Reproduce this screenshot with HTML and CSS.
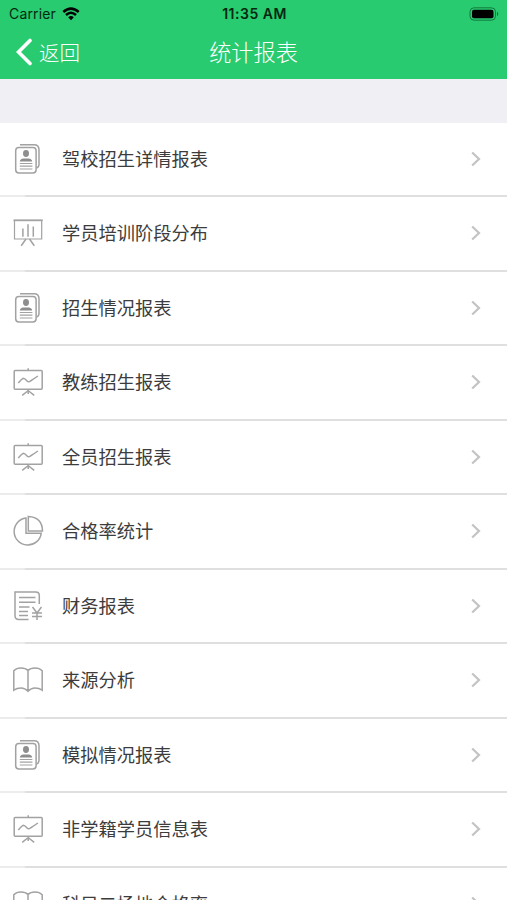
FILE: index.html
```html
<!DOCTYPE html>
<html lang="zh-CN">
<head>
<meta charset="utf-8">
<title>统计报表</title>
<link rel="stylesheet" href="styles.css">
</head>
<body>
<svg class="defs" width="0" height="0" aria-hidden="true">
  <symbol id="cards" viewBox="0 0 32 32">
    <path d="M8 1.800h14q5 0 5 5v14.500q0 3-2.500 3.800"/>
    <rect x="3.700" y="4.600" width="20.400" height="25.400" rx="3.200"/>
    <path class="fill" d="M14 7q3 0 3 3.400 0 3.300-3 3.600-3-.3-3-3.600 0-3.400 3-3.400zM7.800 18.400q.3-2.500 3.700-2.900h5q3.400.4 3.700 2.900z"/>
    <path class="thin" d="M7.800 20.500h12.600M7.800 23.200h12.600M7.800 26h12.600"/>
  </symbol>
  <symbol id="bars" viewBox="0 0 32 32">
    <path d="M1.500 3.300h29.200" stroke-width="1.800"/>
    <path class="thin" d="M2.500 3.500v18.500h27.200V3.500"/>
    <path d="M14 22l-4.800 6.700M17.500 22l4.800 6.700M10.900 19.700v-8.200M16 19.700V7.200M21.300 19.700v-10.200"/>
  </symbol>
  <symbol id="board" viewBox="0 0 32 32">
    <rect x="2.200" y="4.500" width="28" height="18.700" rx="1"/>
    <path d="M16.200 2.300v2M6.300 17q3-3.700 4.800-4.700 1.500 0 4 2.700 1.500 1.600 3.300 0 3.200-2 7.500-5M16.200 23v5M15.700 25l-5.500 4.300M16.700 25l5.500 4.300"/>
  </symbol>
  <symbol id="pie" viewBox="0 0 32 32">
    <path d="M14 3A13.600 13.600 0 1 0 29.200 18.300H14z"/>
    <path d="M16.300 1.400V16h14.200Q30.300 2.100 16.300 1.400z"/>
  </symbol>
  <symbol id="finance" viewBox="0 0 32 32">
    <path d="M27.300 14V5.500q0-3.500-3.500-3.500H3v23.500q0 4 4 4h9.500M7 7.500h16.500M7 12.300h16.500M7 17h10.500M7 21.500h9M7 25.500h9"/>
    <path d="M20.500 17l4.500 6 4.500-6M25 23v7M20 23h10M20 26.500h10"/>
  </symbol>
  <symbol id="book" viewBox="0 0 32 32">
    <path d="M16 6.500v20.800M16 6.500Q13.700 4 9 4T1.800 6.700v19.500Q5 24 9 24t7 3.300Q19 24 23 24t7.200 2.200V6.700Q27.500 4 23 4t-7 2.500z"/>
  </symbol>
</svg>
<header class="header">
  <div class="status">
    <div class="carrier"><span>Carrier</span>
      <svg class="wifi" viewBox="0 0 18 14"><path d="M1.300 5Q9-1.800 16.700 5M4 8q5-4.400 10 0"/><path class="dot" d="M6.200 10.200q2.800-2.300 5.600 0L9 13.200z"/></svg>
    </div>
    <div class="time">11:35 AM</div>
    <svg class="battery" viewBox="0 0 31 14"><rect class="shell" x="1" y=".8" width="25.500" height="12.400" rx="4"/><rect x="3" y="2.700" width="21.500" height="8.600" rx="2"/><path d="M28 4.800q2.500 2.200 0 4.400z" opacity=".5"/></svg>
  </div>
  <nav class="nav">
    <div class="back"><svg viewBox="0 0 18 28"><path d="M14 2.500L2.500 14 14 25.500"/></svg><span>返回</span></div>
    <h1>统计报表</h1>
  </nav>
</header>
<main class="list">
  <div class="row"><svg class="icon"><use href="#cards"/></svg><span>驾校招生详情报表</span><svg class="arrow" viewBox="0 0 10 16"><path d="M1.200 1.500L8 8l-6.800 6.500"/></svg></div>
  <div class="row"><svg class="icon"><use href="#bars"/></svg><span>学员培训阶段分布</span><svg class="arrow" viewBox="0 0 10 16"><path d="M1.200 1.500L8 8l-6.800 6.500"/></svg></div>
  <div class="row"><svg class="icon"><use href="#cards"/></svg><span>招生情况报表</span><svg class="arrow" viewBox="0 0 10 16"><path d="M1.200 1.500L8 8l-6.800 6.500"/></svg></div>
  <div class="row"><svg class="icon"><use href="#board"/></svg><span>教练招生报表</span><svg class="arrow" viewBox="0 0 10 16"><path d="M1.200 1.500L8 8l-6.800 6.500"/></svg></div>
  <div class="row"><svg class="icon"><use href="#board"/></svg><span>全员招生报表</span><svg class="arrow" viewBox="0 0 10 16"><path d="M1.200 1.500L8 8l-6.800 6.500"/></svg></div>
  <div class="row"><svg class="icon"><use href="#pie"/></svg><span>合格率统计</span><svg class="arrow" viewBox="0 0 10 16"><path d="M1.200 1.500L8 8l-6.800 6.500"/></svg></div>
  <div class="row"><svg class="icon"><use href="#finance"/></svg><span>财务报表</span><svg class="arrow" viewBox="0 0 10 16"><path d="M1.200 1.500L8 8l-6.800 6.500"/></svg></div>
  <div class="row"><svg class="icon"><use href="#book"/></svg><span>来源分析</span><svg class="arrow" viewBox="0 0 10 16"><path d="M1.200 1.500L8 8l-6.800 6.500"/></svg></div>
  <div class="row"><svg class="icon"><use href="#cards"/></svg><span>模拟情况报表</span><svg class="arrow" viewBox="0 0 10 16"><path d="M1.200 1.500L8 8l-6.800 6.500"/></svg></div>
  <div class="row"><svg class="icon"><use href="#board"/></svg><span>非学籍学员信息表</span><svg class="arrow" viewBox="0 0 10 16"><path d="M1.200 1.500L8 8l-6.800 6.500"/></svg></div>
  <div class="row"><svg class="icon"><use href="#book"/></svg><span>科目二场地合格率</span><svg class="arrow" viewBox="0 0 10 16"><path d="M1.200 1.500L8 8l-6.800 6.500"/></svg></div>
</main>
</body>
</html>
```
FILE: styles.css
```css
* { box-sizing: border-box; }
body {
  margin: 0;
  height: 900px;
  overflow: hidden;
  display: flex;
  flex-direction: column;
  background: #efeff4;
  color: #3c3c3c;
  font-family: Inter, "Noto Sans CJK SC", sans-serif;
}
svg { flex: none; fill: none; }
.defs { display: none; }
.header { height: 79px; flex: none; background: #28cb70; }
.status {
  height: 27px;
  padding: 0 7px 0 9px;
  display: grid;
  grid-template-columns: 1fr auto 1fr;
  align-items: center;
  color: #04280f;
  font-size: 14px;
}
.carrier { display: flex; align-items: center; gap: 6px; letter-spacing: .15px; }
.wifi { width: 18px; height: 14px; stroke: #000; stroke-width: 2.5; }
.wifi .dot { fill: #000; stroke: none; }
.time { font-weight: 600; font-size: 14px; letter-spacing: .5px; }
.battery { width: 31px; height: 14px; justify-self: end; fill: #000; }
.battery .shell { fill: none; stroke: #137a3e; stroke-width: 1; }
.nav {
  height: 49px;
  padding: 0 16px;
  display: grid;
  grid-template-columns: 1fr auto 1fr;
  align-items: center;
  color: #fff;
}
.back { display: flex; align-items: center; gap: 5px; font-size: 20.5px; font-weight: 300; }
.back svg { width: 18px; height: 28px; stroke: #fff; stroke-width: 3.6; stroke-linecap: round; }
h1 { margin: 0 0 2px; font-size: 22.2px; font-weight: 300; }
.list { flex: none; margin-top: 43.5px; background: #fff; }
.row {
  height: 74.5px;
  padding: 0 26px 2px 12px;
  display: flex;
  align-items: center;
  background: linear-gradient(to right, #ececec 24px, #dfdfdf 26px) left bottom / 100% 2px no-repeat;
  font-size: 18.25px;
}
.row span { flex: 1; }
.icon { width: 32px; height: 32px; margin-right: 18px; stroke: #a2a2a2; stroke-width: 1.5; }
.icon + span { line-height: 28px; }
.thin { stroke-width: 1.2; }
.fill { fill: #8e8e8e; stroke: none; }
.arrow { width: 10px; height: 16px; stroke: #c3c3c3; stroke-width: 2.2; }
```
